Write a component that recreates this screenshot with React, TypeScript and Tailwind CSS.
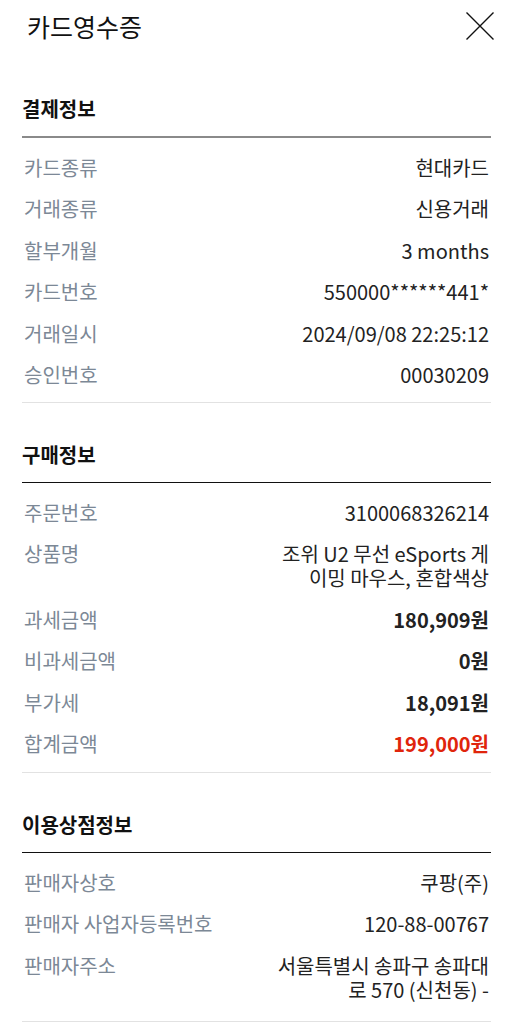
type Row = {
  label: string;
  value: string;
  strong?: boolean;
  red?: boolean;
};

type Section = {
  title: string;
  topLine: string;
  bottomPad: string;
  rows: Row[];
};

const sections: Section[] = [
  {
    title: "결제정보",
    topLine: "h-[2px] bg-[#8a8a8a]",
    bottomPad: "pb-[6px]",
    rows: [
      { label: "카드종류", value: "현대카드" },
      { label: "거래종류", value: "신용거래" },
      { label: "할부개월", value: "3 months" },
      { label: "카드번호", value: "550000******441*" },
      { label: "거래일시", value: "2024/09/08 22:25:12" },
      { label: "승인번호", value: "00030209" },
    ],
  },
  {
    title: "구매정보",
    topLine: "h-px bg-[#111]",
    bottomPad: "pb-[7px]",
    rows: [
      { label: "주문번호", value: "3100068326214" },
      { label: "상품명", value: "조위 U2 무선 eSports 게이밍 마우스, 혼합색상" },
      { label: "과세금액", value: "180,909원", strong: true },
      { label: "비과세금액", value: "0원", strong: true },
      { label: "부가세", value: "18,091원", strong: true },
      { label: "합계금액", value: "199,000원", strong: true, red: true },
    ],
  },
  {
    title: "이용상점정보",
    topLine: "h-px bg-[#111]",
    bottomPad: "pb-[10px]",
    rows: [
      { label: "판매자상호", value: "쿠팡(주)" },
      { label: "판매자 사업자등록번호", value: "120-88-00767" },
      { label: "판매자주소", value: "서울특별시 송파구 송파대로 570 (신천동) -" },
    ],
  },
];

export default function App() {
  return (
    <div className="min-h-screen bg-white font-['Noto_Sans_CJK_KR','Noto_Sans',sans-serif] text-[#222]">
      {/* Header */}
      <div className="flex h-[57px] items-start justify-between pl-[27px] pr-[19px] pt-3">
        <h1 className="text-[25px] leading-[28px] text-[#111]">카드영수증</h1>
        <button aria-label="닫기" className="text-[#111]">
          <svg width="28" height="28" viewBox="0 0 28 28" fill="none" stroke="currentColor" strokeWidth="1.4">
            <path d="M0.5 0.5 L27.5 27.5 M27.5 0.5 L0.5 27.5" />
          </svg>
        </button>
      </div>

      <div className="px-[22px]">
        {sections.map((section) => (
          <section key={section.title}>
            <h2 className="pt-[39px] pb-[14px] text-[20px] font-bold leading-[26px] text-[#111]">
              {section.title}
            </h2>
            <div className={section.topLine} />
            <div className={`pt-[9px] ${section.bottomPad}`}>
              {section.rows.map((row) => (
                <div
                  key={row.label}
                  className="flex items-start justify-between py-[8.75px] text-[20px] leading-[24px]"
                >
                  <span className="shrink-0 pl-[2px] text-[#7c8896]">{row.label}</span>
                  <span
                    className={`max-w-[216px] break-all pr-[2px] text-right ${
                      row.strong ? "font-bold" : ""
                    } ${row.red ? "text-[#e0250c]" : "text-[#222]"}`}
                  >
                    {row.value}
                  </span>
                </div>
              ))}
            </div>
            <div className="h-px bg-[#e2e2e2]" />
          </section>
        ))}
      </div>
    </div>
  );
}
